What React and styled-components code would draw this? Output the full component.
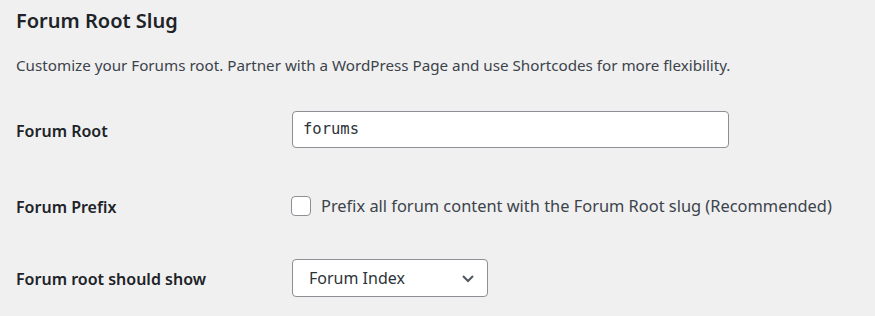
import styled, { createGlobalStyle } from 'styled-components';

const GlobalStyle = createGlobalStyle`
  html, body {
    margin: 0;
    padding: 0;
    background: #f0f0f1;
  }
  body {
    font-family: "Noto Sans", "Open Sans", sans-serif;
    color: #3c434a;
  }
`;

const Wrap = styled.div`
  padding: 0 16px;
`;

const Title = styled.h2`
  margin: 0;
  padding-top: 5px;
  font-size: 20px;
  line-height: 32px;
  font-weight: 600;
  color: #1d2327;
`;

const Desc = styled.p`
  margin: 16px 0 0;
  font-size: 15.2px;
  line-height: 24px;
`;

const Table = styled.div`
  display: grid;
  grid-template-columns: 276px 1fr;
  margin-top: 20px;
`;

const Label = styled.div`
  display: flex;
  align-items: center;
  height: ${p => p.$h}px;
  padding-top: 3px;
  box-sizing: border-box;
  font-size: 16px;
  font-weight: 600;
  color: #1d2327;
`;

const Field = styled.div`
  display: flex;
  align-items: center;
  height: ${p => p.$h}px;
`;

const TextInput = styled.input`
  box-sizing: border-box;
  width: 437px;
  height: 37px;
  padding: 0 10px;
  border: 1px solid #8c8f94;
  border-radius: 4px;
  background: #fff;
  font-family: "DejaVu Sans Mono", monospace;
  font-size: 15.5px;
  color: #2c3338;
  outline: none;
`;

const CheckRow = styled.label`
  display: flex;
  align-items: center;
  gap: 10px;
  font-size: 16.4px;
  color: #3c434a;
`;

const Box = styled.span`
  box-sizing: border-box;
  width: 20px;
  height: 20px;
  margin-left: -1px;
  border: 1px solid #8c8f94;
  border-radius: 4px;
  background: #fff;
`;

const Select = styled.div`
  box-sizing: border-box;
  width: 196px;
  height: 38px;
  padding: 0 9px 0 16px;
  display: flex;
  align-items: center;
  justify-content: space-between;
  border: 1px solid #8c8f94;
  border-radius: 4px;
  background: #fff;
  font-size: 16px;
  color: #2c3338;
`;

export default function App() {
  return (
    <>
      <GlobalStyle />
      <Wrap>
        <Title>Forum Root Slug</Title>
        <Desc>Customize your Forums root. Partner with a WordPress Page and use Shortcodes for more flexibility.</Desc>
        <Table>
          <Label $h={64}>Forum Root</Label>
          <Field $h={64}>
            <TextInput defaultValue="forums" />
          </Field>
          <Label $h={89}>Forum Prefix</Label>
          <Field $h={89}>
            <CheckRow>
              <Box />
              Prefix all forum content with the Forum Root slug (Recommended)
            </CheckRow>
          </Field>
          <Label $h={55}>Forum root should show</Label>
          <Field $h={55}>
            <Select>
              Forum Index
              <svg width="20" height="20" viewBox="0 0 20 20">
                <path d="M5 8l5 5 5-5" fill="none" stroke="#50575e" strokeWidth="2" />
              </svg>
            </Select>
          </Field>
        </Table>
      </Wrap>
    </>
  );
}
